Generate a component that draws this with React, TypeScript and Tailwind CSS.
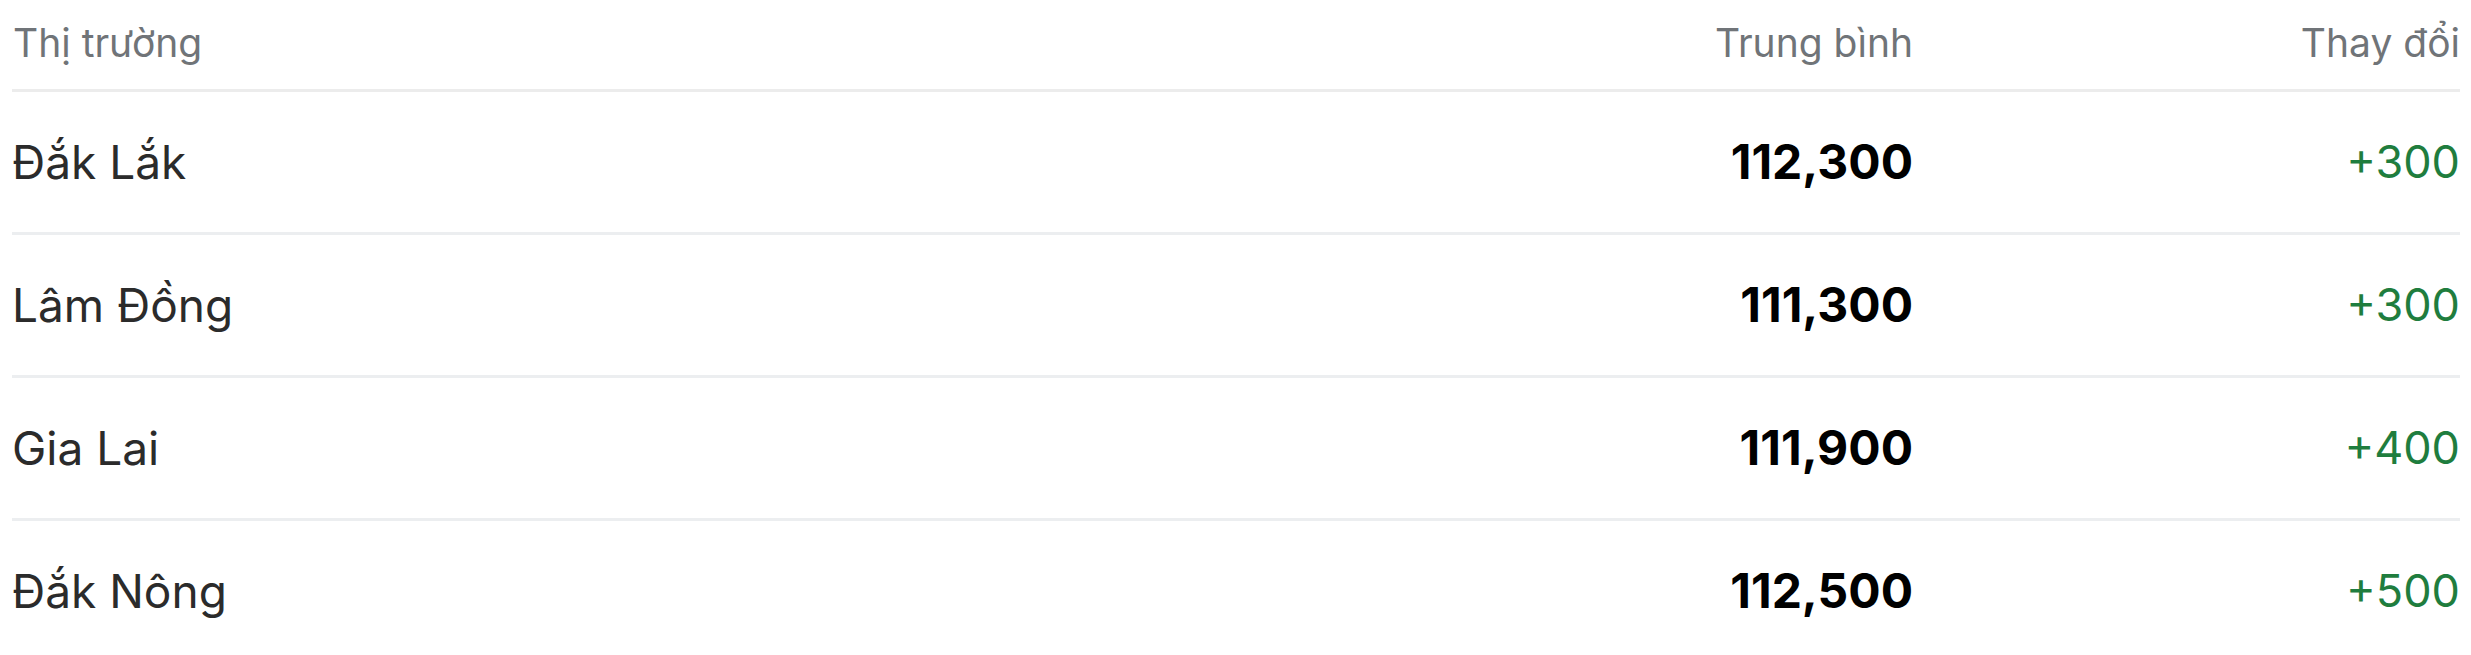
// Bảng giá trung bình theo thị trường, kèm mức thay đổi so với hôm trước.

import React from 'react';

interface MarketRow {
  name: string;
  average: number;
  change: number;
}

const rows: MarketRow[] = [
  { name: 'Đắk Lắk', average: 112300, change: 300 },
  { name: 'Lâm Đồng', average: 111300, change: 300 },
  { name: 'Gia Lai', average: 111900, change: 400 },
  { name: 'Đắk Nông', average: 112500, change: 500 },
];

const formatNumber = (n: number): string => n.toLocaleString('en-US');

const formatChange = (n: number): string => (n > 0 ? `+${formatNumber(n)}` : formatNumber(n));

const App: React.FC = () => {
  return (
    <div className="min-h-screen bg-white font-['Inter','Noto_Sans',sans-serif]">
      <div className="ml-[12px] mr-[11px]">
        {/* ヘッダー */}
        <div className="grid grid-cols-[1fr_400px_547px] h-[92px] pt-[14px] border-b-[3px] border-[#ececec] text-[39px] leading-normal text-[#707478]">
          <div className="pl-[1px]">Thị trường</div>
          <div className="text-right">Trung bình</div>
          <div className="text-right">Thay đổi</div>
        </div>

        {/* 行 */}
        {rows.map((r) => (
          <div
            key={r.name}
            className="grid grid-cols-[1fr_400px_547px] items-center h-[143px] border-b-[3px] border-[#eceef0] leading-normal"
          >
            <div className="text-[46px] text-[#2b2b2b]">{r.name}</div>
            <div className="text-right text-[48px] font-bold text-black">{formatNumber(r.average)}</div>
            <div className="text-right text-[45px] text-[#1f7d3e]">{formatChange(r.change)}</div>
          </div>
        ))}
      </div>
    </div>
  );
};

export default App;
